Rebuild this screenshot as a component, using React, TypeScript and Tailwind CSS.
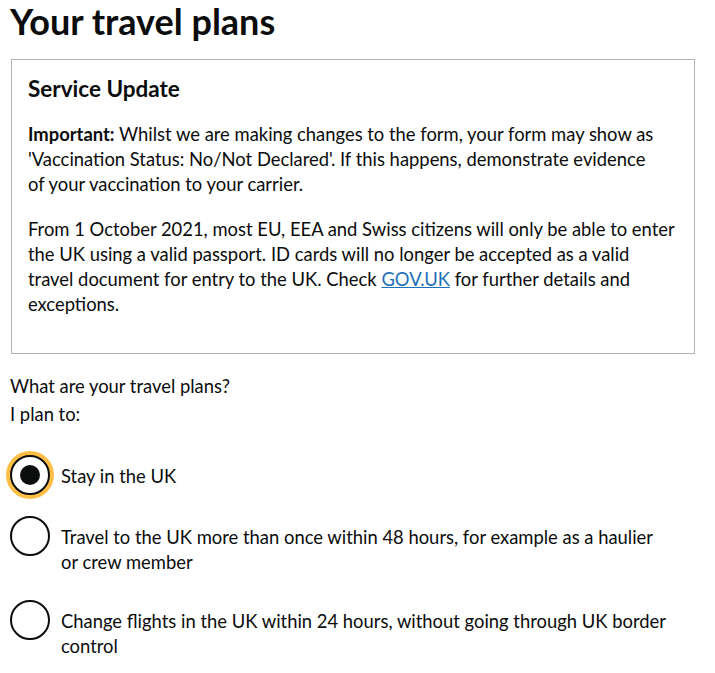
import React from "react";

function Radio({ checked, focused }: { checked?: boolean; focused?: boolean }) {
  return (
    <div
      className={
        "relative w-10 h-10 shrink-0 rounded-full border-2 border-[#0b0c0c] bg-white flex items-center justify-center " +
        (focused ? "shadow-[0_0_0_4px_#ffbf47]" : "")
      }
    >
      {checked ? <div className="w-5 h-5 rounded-full bg-[#0b0c0c]" /> : null}
    </div>
  );
}

function Option({ checked, focused, lines }: { checked?: boolean; focused?: boolean; lines: string[] }) {
  return (
    <div className="flex items-start">
      <Radio checked={checked} focused={focused} />
      <div className="pl-[11px] pt-[9px] pb-[4px] leading-[25px] whitespace-nowrap">
        {lines.map((l, i) => (
          <React.Fragment key={i}>
            {l}
            {i < lines.length - 1 ? <br /> : null}
          </React.Fragment>
        ))}
      </div>
    </div>
  );
}

export default function App() {
  return (
    <div className="bg-white min-h-screen text-[#0b0c0c] font-['Lato',sans-serif] text-[18.4px] leading-[25px] pl-[10px] pr-[20px]">
      <h1 className="text-[36px] font-bold leading-[40px] m-0 pt-[1px]">Your travel plans</h1>
      <div className="mt-[18px] ml-[1px] border border-[#b1b4b6] px-[16px] pt-[14px] pb-[36px]">
        <h2 className="text-[22.5px] font-bold leading-[30px]">Service Update</h2>
        <p className="mt-[18px] whitespace-nowrap">
          <span className="font-bold">Important:</span> Whilst we are making changes to the form, your form may show as
          <br />
          'Vaccination Status: No/Not Declared'. If this happens, demonstrate evidence
          <br />
          of your vaccination to your carrier.
        </p>
        <p className="mt-[20px] whitespace-nowrap">
          From 1 October 2021, most EU, EEA and Swiss citizens will only be able to enter
          <br />
          the UK using a valid passport. ID cards will no longer be accepted as a valid
          <br />
          travel document for entry to the UK. Check{" "}
          <a href="#" className="text-[#1d70b8] underline">
            GOV.UK
          </a>{" "}
          for further details and
          <br />
          exceptions.
        </p>
      </div>
      <p className="mt-[20px]">What are your travel plans?</p>
      <p className="mt-[3px]">I plan to:</p>
      <div className="mt-[28px] flex flex-col gap-[21px]">
        <Option checked focused lines={["Stay in the UK"]} />
        <Option lines={["Travel to the UK more than once within 48 hours, for example as a haulier", "or crew member"]} />
        <Option lines={["Change flights in the UK within 24 hours, without going through UK border", "control"]} />
      </div>
    </div>
  );
}
